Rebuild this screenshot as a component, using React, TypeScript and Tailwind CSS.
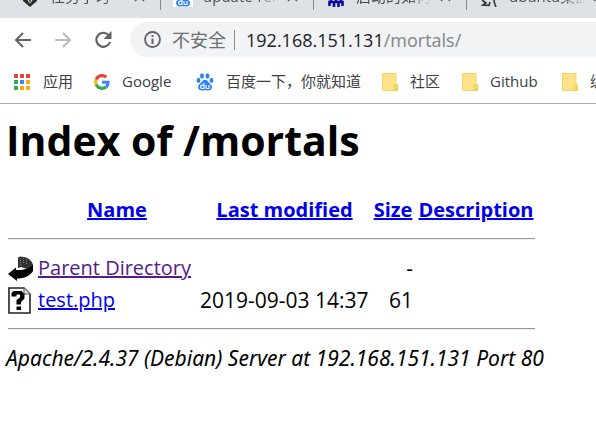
import React from "react";

const uiFont = "font-['Open_Sans','Noto_Sans_CJK_SC',sans-serif]";

function PinIcon() {
  return (
    <svg width="14" height="18" viewBox="0 0 14 18" aria-hidden="true">
      <path d="M7 0a7 7 0 0 1 7 7v5L7 18 0 12V7a7 7 0 0 1 7-7Z" fill="#2c2c2c" />
      <path d="M7 9l2.500 2.500L7 14.500l-2.500-3z" fill="#dfe2e6" />
      <circle cx="7" cy="12" r="1" fill="#2c2c2c" />
    </svg>
  );
}

function PawIcon({ size }: { size: number }) {
  return (
    <svg width={size} height={size} viewBox="0 0 18 18" aria-hidden="true">
      <g fill="#2f83f7">
        <ellipse cx="6" cy="3" rx="2" ry="2.7" />
        <ellipse cx="11.5" cy="3" rx="2" ry="2.7" />
        <ellipse cx="2.5" cy="7.3" rx="1.9" ry="2.6" />
        <ellipse cx="15.5" cy="7.3" rx="1.9" ry="2.6" />
        <path d="M9 6.7c2 0 2.7 1.7 4 3 1.600 1.500 3.300 2.600 2.900 5-.4 2.400-2.300 3-4.100 2.700-1.900-.3-3.700-.3-5.600 0C4.400 17.700 2.500 17 2.100 14.700c-.4-2.400 1.300-3.500 2.900-5C6.300 8.400 7 6.700 9 6.700Z" />
      </g>
      <path
        d="M8 10v5.500H6.200a1.500 1.500 0 0 1 0-3.400H8M10 12v2.200c0 .9.500 1.300 1.300 1.300H13V12"
        fill="none"
        stroke="#fff"
        strokeWidth="1.100"
      />
    </svg>
  );
}

function GateIcon() {
  return (
    <svg width="16" height="16" viewBox="0 0 16 16" aria-hidden="true">
      <path
        d="M1.500 15v-4h13v4M6 16v-5M10.500 16v-5M3 11V2h10v9M8 2v9"
        fill="none"
        stroke="#0d0d9c"
        strokeWidth="2.600"
      />
    </svg>
  );
}

function SketchIcon() {
  return (
    <svg width="16" height="16" viewBox="0 0 16 16" aria-hidden="true">
      <path
        d="M1 9l4 3-3 2 6 .5L9 11M12 3l1 6c0 3 1 5 2 7"
        fill="none"
        stroke="#333"
        strokeWidth="1.600"
      />
    </svg>
  );
}

function Tab({ icon, title }: { icon: React.ReactNode; title: string }) {
  return (
    <div className="flex w-[153px] shrink-0 items-end">
      <span className="flex w-5 justify-center pb-[11px]">{icon}</span>
      <span className="ml-[10px] h-8 w-[76px] overflow-hidden bg-linear-to-r from-[#45494d] from-70% to-transparent bg-clip-text pb-[10px] text-[15px] leading-5 whitespace-nowrap text-transparent">
        {title}
      </span>
      <button aria-label="关闭标签页" className="ml-2 pb-4">
        <svg width="11" height="11" viewBox="0 0 11 11">
          <path d="M1 1l9 9M10 1l-9 9" stroke="#5f6368" strokeWidth="1.500" />
        </svg>
      </button>
      <span className="mr-3 mb-2 ml-auto h-5 w-px bg-[#85888c]" />
    </div>
  );
}

function AppsIcon() {
  const colors = [
    "#ea4335", "#ea4335", "#ea4335",
    "#34a853", "#4285f4", "#fbab04",
    "#34a853", "#fbab04", "#fbab04",
  ];
  return (
    <svg width="18" height="18" viewBox="0 0 18 18" aria-hidden="true">
      {colors.map((c, i) => (
        <rect key={i} x={1 + (i % 3) * 6} y={1 + Math.floor(i / 3) * 6} width="4" height="4" fill={c} />
      ))}
    </svg>
  );
}

function GoogleIcon() {
  return (
    <svg width="16" height="16" viewBox="0 0 48 48" aria-hidden="true">
      <path fill="#EA4335" d="M24 9.500c3.540 0 6.710 1.220 9.210 3.600l6.850-6.850C35.900 2.380 30.470 0 24 0 14.620 0 6.510 5.380 2.560 13.220l7.980 6.190C12.430 13.720 17.740 9.500 24 9.500z" />
      <path fill="#4285F4" d="M46.980 24.550c0-1.570-.15-3.090-.38-4.550H24v9.020h12.940c-.58 2.960-2.260 5.480-4.780 7.180l7.730 6c4.510-4.180 7.090-10.360 7.090-17.650z" />
      <path fill="#FBBC05" d="M10.530 28.590c-.48-1.450-.76-2.990-.76-4.590s.27-3.140.76-4.590l-7.980-6.190C.92 16.460 0 20.120 0 24c0 3.880.92 7.540 2.560 10.780l7.970-6.190z" />
      <path fill="#34A853" d="M24 48c6.480 0 11.930-2.130 15.890-5.810l-7.730-6c-2.150 1.450-4.920 2.300-8.160 2.300-6.260 0-11.570-4.220-13.470-9.910l-7.980 6.190C6.510 42.620 14.620 48 24 48z" />
    </svg>
  );
}

function FolderIcon() {
  return (
    <svg width="16" height="18" viewBox="0 0 16 18" aria-hidden="true">
      <path d="M.5 .5h13.500v11l1.500 1v5H.5z" fill="#ffe287" stroke="#f5d462" />
      <path d="M12.500 17v-3.500l1-1.500h1.500v5z" fill="#ffe98f" stroke="#efc231" />
    </svg>
  );
}

function Bookmark({ icon, label, className }: { icon: React.ReactNode; label: string; className: string }) {
  return (
    <a href="#" className={`flex shrink-0 items-center gap-3 whitespace-nowrap ${className}`}>
      {icon}
      {label}
    </a>
  );
}

function BackIcon() {
  return (
    <svg width="25" height="25" viewBox="0 0 25 25" aria-hidden="true">
      <path d="M10 1.500L12 .5l4 .5c5 1 8 4 9 8v5l-6-1-6-2-3 1z" fill="#333" />
      <path d="M12.500 2v7M15.500 2v6M18.500 3v6" stroke="#777" strokeWidth="1" strokeDasharray="1 1" />
      <path d="M0 18l8-6.500V14c7 .5 13-1 17-5.500V15c-3 5-9 7.500-16 7.500V25z" fill="#000" />
    </svg>
  );
}

function UnknownIcon() {
  return (
    <svg width="23" height="27" viewBox="0 0 23 27" aria-hidden="true">
      <path d="M1 1h15l6 6v19H1z" fill="#fff" stroke="#222" strokeWidth="1.600" />
      <path d="M16 1v6h6" fill="#ddd" stroke="#555" />
      <path d="M3.500 9.500V6l2-2h8l3 3v4.500L13 15v2.500H8.500V13l3.500-2.500V7.500H8.500v2z" fill="#000" />
      <path d="M8.500 19.500H13v3.500H8.500z" fill="#000" />
    </svg>
  );
}

const link = "text-[#0000ee] underline";

function Rule() {
  return (
    <tr>
      <td colSpan={5} className="px-[2px]">
        <hr className="my-3 border-t border-b border-t-[#999] border-b-[#eee]" />
      </td>
    </tr>
  );
}

export default function App() {
  return (
    <div className={`min-h-screen overflow-hidden bg-white ${uiFont}`}>
      <header className="border-b border-[#aaa]">
        <div className="flex h-[18px] items-end overflow-hidden bg-[#dee1e6] pl-5">
          <Tab icon={<PinIcon />} title="任务学习" />
          <Tab icon={<span className="bg-white px-px"><PawIcon size={18} /></span>} title="update-release" />
          <Tab icon={<GateIcon />} title="启动的如何处理" />
          <Tab icon={<SketchIcon />} title="ubuntu桌面版" />
        </div>

        <div className="flex h-11 items-center pb-px">
          <button aria-label="后退" className="ml-[14px]">
            <svg width="17" height="16" viewBox="0 0 17 16" fill="none" stroke="#5f6368" strokeWidth="2">
              <path d="M17 8H2M9 1L2 8l7 7" />
            </svg>
          </button>
          <button aria-label="前进" className="ml-6">
            <svg width="17" height="16" viewBox="0 0 17 16" fill="none" stroke="#babcbe" strokeWidth="2">
              <path d="M0 8h15M8 1l7 7-7 7" />
            </svg>
          </button>
          <button aria-label="重新加载" className="ml-[22px]">
            <svg width="18" height="18" viewBox="0 0 18 18">
              <path d="M14.500 4A7 7 0 1 0 16 11" fill="none" stroke="#5f6368" strokeWidth="2.200" />
              <path d="M17.500 0v8H9.500z" fill="#5f6368" />
            </svg>
          </button>
          <div className="ml-[18px] flex h-[35px] min-w-0 flex-1 items-center rounded-l-full bg-[#f1f3f4] pl-[14px] text-lg">
            <svg className="shrink-0" width="17" height="17" viewBox="0 0 17 17" aria-hidden="true">
              <circle cx="8.500" cy="8.500" r="7.500" fill="none" stroke="#5f6368" strokeWidth="1.800" />
              <path d="M8.500 7.500V13M8.500 4v2" stroke="#5f6368" strokeWidth="2" />
            </svg>
            <span className="ml-[11px] shrink-0 text-[#6b6e72]">不安全</span>
            <span className="ml-2 h-5 w-px shrink-0 bg-[#8a8d91]" />
            <span className="ml-[11px] whitespace-nowrap text-[#202124]">
              192.168.151.131<span className="text-[#80868b]">/mortals/</span>
            </span>
          </div>
        </div>

        <nav className="flex h-[41px] items-center overflow-hidden pb-0.5 pl-[13px] text-[15px] text-[#3c4043]">
          <Bookmark className="w-[81px]" icon={<AppsIcon />} label="应用" />
          <Bookmark className="w-[102px]" icon={<GoogleIcon />} label="Google" />
          <Bookmark className="w-[186px]" icon={<PawIcon size={18} />} label="百度一下，你就知道" />
          <Bookmark className="w-20" icon={<FolderIcon />} label="社区" />
          <Bookmark className="w-[100px]" icon={<FolderIcon />} label="Github" />
          <Bookmark className="w-20" icon={<FolderIcon />} label="编程" />
        </nav>
      </header>

      <main className="px-[6px] pt-[10px] text-[21px] leading-8 text-black">
        <h1 className="text-[41px] leading-[52px] font-bold whitespace-nowrap">Index of /mortals</h1>
        <table className="mt-7 w-[531px] table-fixed border-collapse whitespace-nowrap">
          <colgroup>
            <col className="w-[30px]" />
            <col className="w-[162px]" />
            <col className="w-[173px]" />
            <col className="w-[44px]" />
            <col className="w-[122px]" />
          </colgroup>
          <thead className="text-[20px]">
            <tr>
              <th />
              <th><a href="#" className={link}>Name</a></th>
              <th><a href="#" className={link}>Last modified</a></th>
              <th><a href="#" className={link}>Size</a></th>
              <th><a href="#" className={link}>Description</a></th>
            </tr>
          </thead>
          <tbody>
            <Rule />
            <tr>
              <td className="pl-[2px]"><BackIcon /></td>
              <td className="px-[2px] text-[20px]"><a href="#" className="text-[#551a8b] underline">Parent Directory</a></td>
              <td />
              <td className="px-[2px] text-right">-</td>
              <td />
            </tr>
            <tr>
              <td className="pl-[2px]"><UnknownIcon /></td>
              <td className="px-[2px] text-[20px]"><a href="#" className={link}>test.php</a></td>
              <td className="px-[2px]">2019-09-03 14:37</td>
              <td className="px-[2px] text-right">61</td>
              <td />
            </tr>
            <Rule />
          </tbody>
        </table>
        <address className="font-['Noto_Sans',sans-serif] whitespace-nowrap italic">Apache/2.4.37 (Debian) Server at 192.168.151.131 Port 80</address>
      </main>
    </div>
  );
}
